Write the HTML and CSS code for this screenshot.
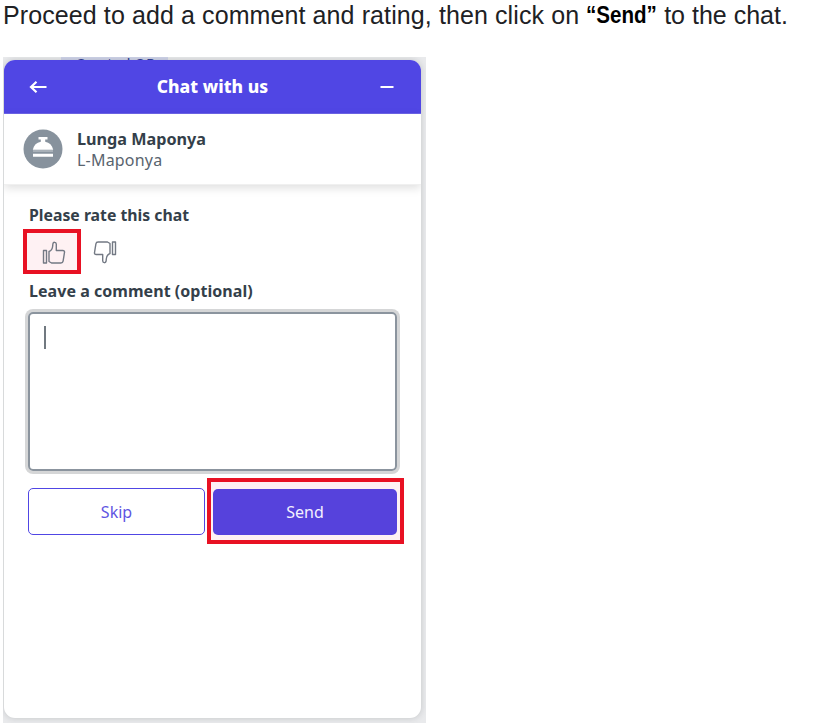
FILE: index.html
```html
<!DOCTYPE html>
<html lang="en">
<head>
<meta charset="utf-8">
<title>Chat with us</title>
<link rel="stylesheet" href="styles.css">
</head>
<body>
<p class="instruction"><span class="lead">Proceed to add a comment and rating, then click on </span><strong>“Send”</strong><span class="tail"> to the chat.</span></p>
<div class="frame">
  <div class="backdrop"><span class="backdrop-text">Created OR</span></div>
  <main class="chat">
    <header class="bar">
      <svg class="back" viewBox="0 0 18 14" width="18" height="14"><path d="M7.500 1.700 2 7l5.500 5.300M2 7H17.500"/></svg>
      <h1><span>Chat with us</span></h1>
      <svg class="minimize" viewBox="0 0 14 4" width="14" height="4"><path d="M.5 2h13"/></svg>
    </header>
    <section class="agent">
      <svg class="avatar" viewBox="0 0 40 40" width="40" height="40"><circle cx="20" cy="20" r="19.500" fill="#87929d"/><path fill="#fff" d="M15.500 8h9v2.500h-2.300v2.200c4.300.8 7 3.500 8 8H9.800c1-4.500 3.700-7.200 8-8v-2.200h-2.300zM10 24.800h20v2.900H10z"/><path fill="#c9ced3" d="M10 21.600h20v1H10z"/></svg>
      <div class="who"><div class="name">Lunga Maponya</div><div class="handle">L-Maponya</div></div>
    </section>
    <section class="form">
      <h2 class="rate">Please rate this chat</h2>
      <div class="thumbs">
        <button class="thumb selected" aria-label="Good"><svg viewBox="0 0 24 24" width="24" height="24"><path d="M1.500 9.500h3v12.500h-3zM7 10.500c2.500-.8 3.500-3.300 3.700-5.500l.2-2.200C11.200.8 14 .8 14.300 3v6.500h6.500c1.200 0 1.900.7 1.700 1.900l-1.400 8.700c-.2 1.200-1 1.900-2.200 1.900H9.500L7 20.500z"/></svg></button>
        <button class="thumb" aria-label="Bad"><svg class="down" viewBox="0 0 24 24" width="24" height="24"><path d="M1.500 9.500h3v12.500h-3zM7 10.500c2.500-.8 3.500-3.300 3.700-5.500l.2-2.200C11.200.8 14 .8 14.300 3v6.500h6.500c1.200 0 1.900.7 1.700 1.900l-1.400 8.700c-.2 1.200-1 1.900-2.200 1.900H9.500L7 20.500z"/></svg></button>
      </div>
      <h2 class="comment-label">Leave a comment (optional)</h2>
      <div class="comment" role="textbox"><span class="caret"></span></div>
      <div class="actions">
        <button class="skip">Skip</button>
        <div class="send-mark"><button class="send">Send</button></div>
      </div>
    </section>
  </main>
</div>
</body>
</html>
```
FILE: styles.css
```css
* { box-sizing: border-box; }
body { margin: 0; background: #fff; font-family: "Noto Sans", sans-serif; color: #343f4a; }
h1, h2, p { margin: 0; }
button { font: inherit; padding: 0; margin: 0; }
.instruction { display: flex; height: 57px; padding: 0 0 0 3px; font: 25px/30px "Liberation Sans", sans-serif; color: #202124; white-space: pre; letter-spacing: 0.1px; }
.instruction strong { width: 71px; font-size: 24.500px; color: #000; letter-spacing: 0; transform: scaleX(.84); transform-origin: 0 0; }
.tail { letter-spacing: 0; }
.frame { position: relative; width: 423px; height: 666px; margin-left: 3px; padding: 3px 5px 5px 1px; background: #e9eaec; overflow: hidden; }
.backdrop { position: absolute; left: 58px; top: 0; width: 107px; height: 10px; background: #cfd3e9; }
.backdrop-text { position: absolute; left: 14px; top: -3px; font-size: 15px; line-height: 18px; color: #2d3b94; white-space: nowrap; }
.chat { position: relative; width: 417px; height: 658px; background: #fff; border-radius: 11px; overflow: hidden; box-shadow: 0 0 6px rgba(60, 64, 67, .22); }
.bar { display: flex; align-items: center; justify-content: space-between; height: 54px; padding: 0 27px 0 25px; background: #5046e4; color: #fff; border-bottom: 1px solid #6d65e9; }
.bar h1 { font-size: 17.500px; line-height: 24px; font-weight: 800; letter-spacing: 0.05px; position: relative; top: -1px; left: -1px; }
.bar path { fill: none; stroke: #fff; stroke-width: 2.200; }
.back { margin-top: 1px; }
.agent { display: flex; height: 71px; padding: 15px 19px; gap: 14px; border-bottom: 1px solid #f0f0f0; box-shadow: 0 3px 9px rgba(0, 0, 0, .13); }
.name { font-size: 16.200px; line-height: 21px; font-weight: 700; }
.handle { font-size: 16px; line-height: 21px; color: #59646e; letter-spacing: 0.2px; }
.form { padding: 19px 17px 0 19px; }
.form h2 { padding-left: 6px; font-size: 15.800px; line-height: 22px; font-weight: 700; white-space: nowrap; }
.thumbs { display: flex; height: 45px; margin-top: 3px; }
.thumb { display: flex; align-items: center; justify-content: center; width: 48px; height: 45px; border: 0; background: none; }
.thumb.selected { width: 58px; border: 4px solid #e81123; background: #fef1f3; padding: 3px 0 0 4px; }
.thumb path { fill: none; stroke: #737984; stroke-width: 1.400; stroke-linejoin: round; }
.down { transform: rotate(180deg); }
.form .comment-label { margin-top: 6px; font-size: 16px; letter-spacing: 0.04px; }
.comment { width: 369px; height: 159px; margin: 10px 0 0 5px; padding: 12px 14px; border: 2px solid #8b949e; border-radius: 5px; box-shadow: 0 0 0 3px #d5d6d7; }
.caret { display: block; width: 2px; height: 23px; background: #717980; }
.actions { display: flex; margin: 7px 0 0 5px; align-items: center; gap: 2px; }
.skip { width: 177px; height: 47px; margin-top: 1px; border: 1px solid #5046e4; border-radius: 5px; background: #fff; color: #5f55e2; font-size: 16px; }
.send-mark { width: 197px; height: 66px; padding: 7px 3px 4px 2px; border: 4px solid #e81123; background: #fef1f3; flex: none; }
.send { display: block; width: 184px; height: 46px; border: 0; border-radius: 5px; background: #5642dc; color: #f3f0ff; font-size: 16px; }
```
